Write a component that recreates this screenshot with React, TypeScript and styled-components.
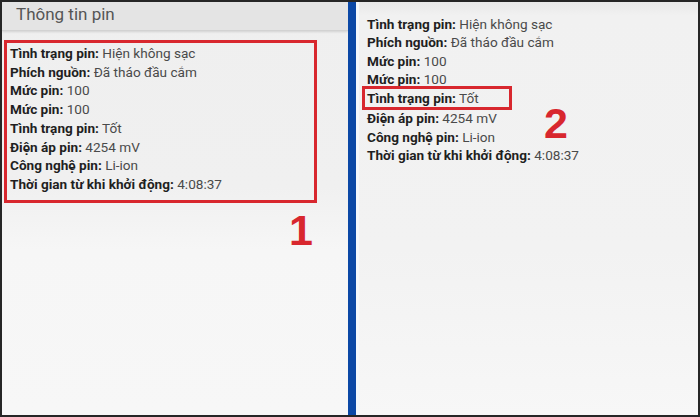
import React from "react";
import styled, { createGlobalStyle } from "styled-components";

const annotationRed = "#d8272e";

const GlobalStyle = createGlobalStyle`
  html, body {
    margin: 0;
    padding: 0;
    background: #1a1a1a;
  }
  body {
    font-family: Roboto, "Noto Sans", "Liberation Sans", sans-serif;
  }
`;

const Frame = styled.div`
  width: 700px;
  height: 417px;
  box-sizing: border-box;
  border: 2px solid #262626;
  display: flex;
  background: #f4f4f4;
  overflow: hidden;
`;

const LeftPanel = styled.section`
  width: 346px;
  display: flex;
  flex-direction: column;
  background: linear-gradient(#efefef 0%, #f0f0f0 45%, #f6f6f6 60%, #f7f7f7 100%);
`;

const Header = styled.header`
  height: 28px;
  background: #e4e4e4;
  border-bottom: 1px solid #d2d2d2;
  box-shadow: 0 1px 2px rgba(0, 0, 0, 0.12);
  padding-left: 14px;
  font-size: 17px;
  line-height: 24px;
  color: #555;
`;

const Divider = styled.div`
  width: 8px;
  background: #0b48a6;
  border-right: 3px solid #f4f8fc;
`;

const RightPanel = styled.section`
  flex: 1;
  position: relative;
  padding: 13px 0 0 8px;
  background: linear-gradient(#e9e9e9 0px, #f1f1f1 14px, #f2f2f2 60%, #f7f7f7 100%);
`;

const InfoList = styled.div<{ $boxed?: boolean }>`
  display: flex;
  flex-direction: column;
  align-items: flex-start;
  width: ${(p) => (p.$boxed ? "304px" : "auto")};
  margin: ${(p) => (p.$boxed ? "9px 0 0 2px" : "0")};
  padding: ${(p) => (p.$boxed ? "1px 0 6px 3px" : "0")};
  border: ${(p) => (p.$boxed ? `3px solid ${annotationRed}` : "none")};
`;

const Row = styled.div<{ $highlight?: boolean; $gap: number }>`
  font-size: 13.6px;
  line-height: ${(p) => p.$gap}px;
  color: #4a4a4a;
  white-space: nowrap;
  ${(p) =>
    p.$highlight &&
    `
    width: 142px;
    margin: 0 0 -3px -5px;
    padding-left: 2px;
    transform: translateY(-2px);
    border: 3px solid ${annotationRed};
  `}
`;

const Label = styled.b`
  font-weight: 700;
  color: #1f1f1f;
`;

const Number = styled.div`
  font-family: "Liberation Sans", Arial, sans-serif;
  font-weight: 700;
  font-size: 43px;
  line-height: 1;
  color: ${annotationRed};
`;

const LeftNumber = styled(Number)`
  align-self: flex-end;
  margin: 6px 35px 0 0;
`;

const RightNumber = styled(Number)`
  position: absolute;
  left: 185px;
  top: 100px;
`;

const rows: [string, string][] = [
  ["Tình trạng pin:", "Hiện không sạc"],
  ["Phích nguồn:", "Đã tháo đầu cắm"],
  ["Mức pin:", "100"],
  ["Mức pin:", "100"],
  ["Tình trạng pin:", "Tốt"],
  ["Điện áp pin:", "4254 mV"],
  ["Công nghệ pin:", "Li-ion"],
  ["Thời gian từ khi khởi động:", "4:08:37"],
];

const App = () => {
  return (
    <>
      <GlobalStyle />
      <Frame>
        <LeftPanel>
          <Header>Thông tin pin</Header>
          <InfoList $boxed>
            {rows.map(([label, value], i) => (
              <Row key={i} $gap={18.7}>
                <Label>{label}</Label> {value}
              </Row>
            ))}
          </InfoList>
          <LeftNumber>1</LeftNumber>
        </LeftPanel>
        <Divider />
        <RightPanel>
          <InfoList>
            {rows.map(([label, value], i) => (
              <Row key={i} $gap={18.3} $highlight={i === 4}>
                <Label>{label}</Label> {value}
              </Row>
            ))}
          </InfoList>
          <RightNumber>2</RightNumber>
        </RightPanel>
      </Frame>
    </>
  );
};

export default App;
